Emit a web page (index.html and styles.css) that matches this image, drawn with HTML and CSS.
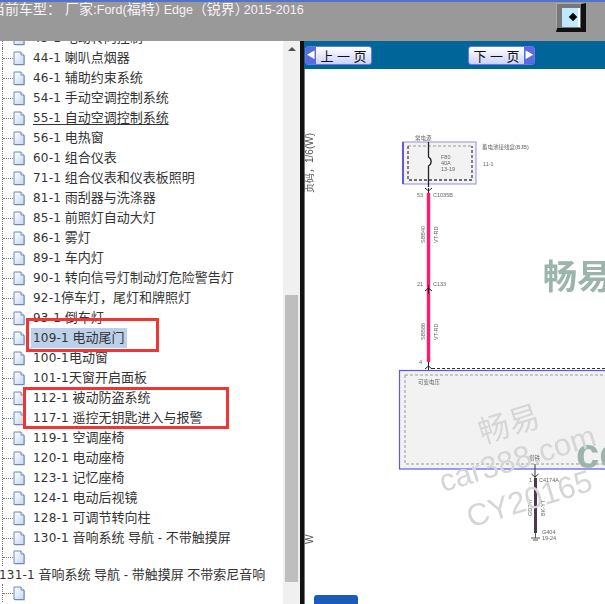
FILE: index.html
```html
<!DOCTYPE html>
<html lang="zh-CN">
<head>
    <meta charset="UTF-8">
    <meta name="viewport" content="width=device-width, initial-scale=1.0">
    <title>当前车型</title>
    <link rel="stylesheet" href="styles.css">
</head>
<body>
    <svg class="defs" width="0" height="0">
        <defs>
            <linearGradient id="pageFill" x1="0" y1="0" x2="1" y2="1">
                <stop offset="0" stop-color="#ffffff"/>
                <stop offset="1" stop-color="#c4d8f4"/>
            </linearGradient>
            <symbol id="page" viewBox="0 0 13 15">
                <path d="M2 2H9L12 5V14.5H2Z" fill="#9a9aa8" opacity="0.6"/>
                <path d="M1 1H8L11 4V13.5H1Z" fill="url(#pageFill)" stroke="#6f86b8"/>
                <path d="M8 1V4H11" fill="#fff" stroke="#6f86b8"/>
            </symbol>
        </defs>
    </svg>

    <header class="topbar">
        <div class="topbar-title">当前车型： 厂家:<span class="latin">Ford(</span>福特<span class="paren">）</span><span class="latin">Edge</span>（锐界<span class="paren">）</span><span class="latin">2015-2016</span></div>
        <div class="toggle">
            <div class="toggle-inner">
                <span class="toggle-mark"></span>
            </div>
        </div>
    </header>

    <main class="main">
        <section class="tree-pane">
            <ul class="tree">
                <li class="row"><span class="stem"></span><svg class="icon"><use href="#page"/></svg><span class="label"><span class="code">43-1</span> 电动转向控制</span></li>
                <li class="row"><span class="stem"></span><svg class="icon"><use href="#page"/></svg><span class="label"><span class="code">44-1</span> 喇叭点烟器</span></li>
                <li class="row"><span class="stem"></span><svg class="icon"><use href="#page"/></svg><span class="label"><span class="code">46-1</span> 辅助约束系统</span></li>
                <li class="row"><span class="stem"></span><svg class="icon"><use href="#page"/></svg><span class="label"><span class="code">54-1</span> 手动空调控制系统</span></li>
                <li class="row"><span class="stem"></span><svg class="icon"><use href="#page"/></svg><span class="label hovered"><span class="code">55-1</span> 自动空调控制系统</span></li>
                <li class="row"><span class="stem"></span><svg class="icon"><use href="#page"/></svg><span class="label"><span class="code">56-1</span> 电热窗</span></li>
                <li class="row"><span class="stem"></span><svg class="icon"><use href="#page"/></svg><span class="label"><span class="code">60-1</span> 组合仪表</span></li>
                <li class="row"><span class="stem"></span><svg class="icon"><use href="#page"/></svg><span class="label"><span class="code">71-1</span> 组合仪表和仪表板照明</span></li>
                <li class="row"><span class="stem"></span><svg class="icon"><use href="#page"/></svg><span class="label"><span class="code">81-1</span> 雨刮器与洗涤器</span></li>
                <li class="row"><span class="stem"></span><svg class="icon"><use href="#page"/></svg><span class="label"><span class="code">85-1</span> 前照灯自动大灯</span></li>
                <li class="row"><span class="stem"></span><svg class="icon"><use href="#page"/></svg><span class="label"><span class="code">86-1</span> 雾灯</span></li>
                <li class="row"><span class="stem"></span><svg class="icon"><use href="#page"/></svg><span class="label"><span class="code">89-1</span> 车内灯</span></li>
                <li class="row"><span class="stem"></span><svg class="icon"><use href="#page"/></svg><span class="label"><span class="code">90-1</span> 转向信号灯制动灯危险警告灯</span></li>
                <li class="row"><span class="stem"></span><svg class="icon"><use href="#page"/></svg><span class="label"><span class="code">92-1</span>停车灯，尾灯和牌照灯</span></li>
                <li class="row"><span class="stem"></span><svg class="icon"><use href="#page"/></svg><span class="label"><span class="code">93-1</span> 倒车灯</span></li>
                <li class="row"><span class="stem"></span><svg class="icon"><use href="#page"/></svg><span class="label selected"><span class="code">109-1</span> 电动尾门</span></li>
                <li class="row"><span class="stem"></span><svg class="icon"><use href="#page"/></svg><span class="label"><span class="code">100-1</span>电动窗</span></li>
                <li class="row"><span class="stem"></span><svg class="icon"><use href="#page"/></svg><span class="label"><span class="code">101-1</span>天窗开启面板</span></li>
                <li class="row"><span class="stem"></span><svg class="icon"><use href="#page"/></svg><span class="label"><span class="code">112-1</span> 被动防盗系统</span></li>
                <li class="row"><span class="stem"></span><svg class="icon"><use href="#page"/></svg><span class="label"><span class="code">117-1</span> 遥控无钥匙进入与报警</span></li>
                <li class="row"><span class="stem"></span><svg class="icon"><use href="#page"/></svg><span class="label"><span class="code">119-1</span> 空调座椅</span></li>
                <li class="row"><span class="stem"></span><svg class="icon"><use href="#page"/></svg><span class="label"><span class="code">120-1</span> 电动座椅</span></li>
                <li class="row"><span class="stem"></span><svg class="icon"><use href="#page"/></svg><span class="label"><span class="code">123-1</span> 记忆座椅</span></li>
                <li class="row"><span class="stem"></span><svg class="icon"><use href="#page"/></svg><span class="label"><span class="code">124-1</span> 电动后视镜</span></li>
                <li class="row"><span class="stem"></span><svg class="icon"><use href="#page"/></svg><span class="label"><span class="code">128-1</span> 可调节转向柱</span></li>
                <li class="row"><span class="stem"></span><svg class="icon"><use href="#page"/></svg><span class="label"><span class="code">130-1</span> 音响系统 导航 - 不带触摸屏</span></li>
                <li class="row row-short"><span class="stem"></span><svg class="icon"><use href="#page"/></svg></li>
                <li class="row-wrapped"><span class="code">131-1</span> 音响系统 导航 - 带触摸屏 不带索尼音响</li>
                <li class="row row-short"><span class="stem"></span><svg class="icon"><use href="#page"/></svg></li>
            </ul>
            <div class="scrollbar">
                <span class="scroll-up"></span>
                <div class="scroll-thumb"></div>
            </div>
            <div class="callout callout-one"></div>
            <div class="callout callout-two"></div>
        </section>

        <section class="viewer">
            <nav class="pager">
                <div class="page-btn page-btn-prev"><span class="page-arrow">&#9664;</span><span class="page-text">上 一 页</span></div>
                <div class="page-btn page-btn-next"><span class="page-text">下 一 页</span><span class="page-arrow">&#9654;</span></div>
            </nav>
            <svg class="diagram" viewBox="304 69 301 535">
                <g class="soft">
                    <rect x="403" y="142" width="73" height="42" fill="#f2f2f2" stroke="#8f8fe0"/>
                    <path d="M403 142V184" stroke="#3a3ad0" stroke-width="1.5"/>
                    <path d="M408 146H472" stroke="#999" stroke-dasharray="3 2"/>
                    <path d="M408 146V180H472V146" fill="none" stroke="#444" stroke-width="1.3" stroke-dasharray="3 2"/>
                    <path d="M428.500 142V157C432 159 432 164 428.500 166V187" fill="none" stroke="#222" stroke-width="1.3"/>
                    <path d="M425 188L428.500 191L432 188M428.500 188V193" fill="none" stroke="#222"/>
                    <rect x="426.800" y="193" width="3.400" height="169" fill="#ff1a70"/>
                    <path d="M425 291L428.500 288L432 291M428.500 285V294" fill="none" stroke="#222"/>
                    <path d="M425 369L428.500 366L432 369M428.500 362V376" fill="none" stroke="#222"/>

                    <rect x="399.500" y="370.500" width="210" height="98.500" fill="#f2f2f2" stroke="#5a5ae6" stroke-width="1.200"/>
                    <rect x="405" y="375" width="210" height="89" fill="none" stroke="#999" stroke-dasharray="3 2"/>
                    <path d="M432 368.500H609" stroke="#333" stroke-dasharray="3 2"/>
                    <path d="M535 464V478M531.500 474L535 477L538.500 474" fill="none" stroke="#333"/>
                    <rect x="534" y="478" width="3" height="55" fill="#4a3a50"/>
                    <path d="M535.500 533V538M531 538H540M533 540H538" stroke="#555"/>

                    <text class="tiny" x="415" y="140">常电源</text>
                    <text class="tiny" x="482" y="149">蓄电池接线盒(BJB)</text>
                    <text class="tiny" x="483" y="166">11-1</text>
                    <text class="tiny" x="441" y="159">F80</text>
                    <text class="tiny" x="441" y="165">40A</text>
                    <text class="tiny" x="441" y="171">13-19</text>
                    <text class="tiny" x="417" y="197">53</text>
                    <text class="tiny" x="433" y="197">C1035B</text>
                    <text class="tiny" x="417" y="286">21</text>
                    <text class="tiny" x="433" y="286">C133</text>
                    <text class="tiny" x="419" y="364">4</text>
                    <text class="tiny" x="418" y="384">可变电压</text>
                    <text class="tiny" x="529" y="460">搭铁</text>
                    <text class="tiny" x="529" y="482">1</text>
                    <text class="tiny" x="539" y="482">C4174A</text>
                    <text class="tiny" x="542" y="534">G404</text>
                    <text class="tiny" x="542" y="540">19-24</text>
                    <text class="tiny" transform="rotate(-90 425 243)" x="425" y="243">SBB40</text>
                    <text class="tiny" transform="rotate(-90 438 243)" x="438" y="243">VT-RD</text>
                    <text class="tiny" transform="rotate(-90 425 340)" x="425" y="340">SBB86</text>
                    <text class="tiny" transform="rotate(-90 438 340)" x="438" y="340">VT-RD</text>
                    <text class="tiny" transform="rotate(-90 532 516)" x="532" y="516">GD247</text>
                    <text class="tiny" transform="rotate(-90 545 516)" x="545" y="516">BK-YT</text>
                    <text class="page-note" transform="rotate(-90 313 193)" x="313" y="193">页码，1/6(W)</text>
                    <text class="page-note" transform="rotate(-90 313 544)" x="313" y="544">W</text>
                </g>
                <g class="soft">
                    <text class="mark-teal" x="543" y="289">畅易</text>
                    <text class="mark-teal mark-latin" x="576" y="468">co</text>
                    <g transform="rotate(-17 520 450)">
                        <text class="mark-gray" x="486" y="433">畅易</text>
                        <text class="mark-gray" x="434" y="468">car388.com</text>
                        <text class="mark-gray" x="450" y="510">CY20165</text>
                    </g>
                </g>
            </svg>
            <div class="stub"></div>
        </section>
    </main>
</body>
</html>
```

FILE: styles.css
```css
* {
    box-sizing: border-box;
}
html, body {
    height: 100%;
}
body {
    margin: 0;
    display: flex;
    flex-direction: column;
    overflow: hidden;
    background: #fff;
    color: #333;
    font-family: "Liberation Sans", "Noto Sans CJK SC", sans-serif;
    font-size: 13px;
}
.defs {
    position: absolute;
}

/* top bar */
.topbar {
    height: 41px;
    flex: none;
    display: flex;
    justify-content: space-between;
    align-items: flex-start;
    background: #999;
    border-top: 2px solid #4f74c8;
}
.topbar-title {
    margin-left: -9px;
    color: #f4f4f4;
    font-size: 14px;
    line-height: 15px;
    white-space: nowrap;
}
.latin {
    font-size: 12.5px;
}
.paren {
    margin-right: -5px;
}
.toggle {
    width: 30px;
    height: 29px;
    margin: 1px 19px 0 0;
    padding: 4px 1px 1px 5px;
    background: #787878;
    border-style: solid;
    border-width: 1px 5px 4px 1px;
    border-color: #aaa #111 #111 #aaa;
}
.toggle-inner {
    height: 100%;
    position: relative;
    background: #bfe9ff;
    border-right: 2px solid #fff;
}
.toggle-mark {
    position: absolute;
    top: 6px;
    left: 8px;
    width: 6px;
    height: 6px;
    background: #000;
    transform: rotate(45deg);
}

/* layout */
.main {
    flex: 1;
    min-height: 0;
    display: flex;
}
.tree-pane {
    width: 300px;
    flex: none;
    display: flex;
    position: relative;
    overflow: hidden;
}

/* tree */
.tree {
    flex: 1;
    min-width: 0;
    margin: -13px 0 0;
    padding: 0;
    list-style: none;
}
.row {
    height: 20px;
    margin-left: 2px;
    display: flex;
    align-items: center;
    border-left: 1px dotted #777;
    white-space: nowrap;
}
.row-short {
    height: 18px;
}
.row-wrapped {
    height: 18px;
    line-height: 18px;
    margin-left: -1px;
    white-space: nowrap;
}
.stem {
    width: 10px;
    height: 1px;
    flex: none;
    border-top: 1px dotted #777;
}
.icon {
    width: 13px;
    height: 15px;
    flex: none;
}
.label {
    margin-left: 5px;
    padding: 0 2px;
    line-height: 19px;
}
.code {
    font-family: "DejaVu Sans", sans-serif;
    font-size: 12px;
    letter-spacing: 0.2px;
}
.hovered {
    text-decoration: underline;
    text-underline-offset: 2px;
}
.selected {
    background: #bcd0ea;
}

/* scrollbar */
.scrollbar {
    width: 17px;
    flex: none;
    padding: 6px 2px 0;
    display: flex;
    flex-direction: column;
    align-items: center;
    background: #f0f0f0;
}
.scroll-up {
    width: 0;
    height: 0;
    flex: none;
    border-left: 4px solid transparent;
    border-right: 4px solid transparent;
    border-bottom: 4px solid #505050;
}
.scroll-thumb {
    width: 13px;
    height: 287px;
    flex: none;
    margin-top: 244px;
    background: #bebebe;
}

/* red notes drawn over the list */
.callout {
    position: absolute;
    border: 3px solid #f03535;
}
.callout-one {
    left: 26px;
    top: 277px;
    width: 133px;
    height: 34px;
}
.callout-two {
    left: 23px;
    top: 346px;
    width: 206px;
    height: 42px;
}

/* right side */
.viewer {
    flex: 1;
    min-width: 0;
    display: flex;
    flex-direction: column;
    position: relative;
    overflow: hidden;
    border-left: 4px solid #111;
    box-shadow: inset 1px 0 0 #777;
}
.pager {
    height: 28px;
    flex: none;
    display: flex;
    justify-content: space-between;
    align-items: flex-start;
    padding: 5px 70px 0 1px;
    background: #006699;
}
.page-btn {
    width: 67px;
    height: 19px;
    display: flex;
    align-items: center;
    justify-content: space-between;
    background: linear-gradient(#ffffff, #ccd2f6);
    border: 1px solid #6e78e0;
    border-radius: 3px;
    color: #111;
    font-size: 13px;
}
.page-arrow {
    width: 10px;
    height: 100%;
    flex: none;
    background: #5a6ae0;
    color: #fff;
    font-size: 9px;
    line-height: 17px;
    text-align: center;
}
.page-text {
    flex: 1;
    text-align: center;
    white-space: nowrap;
}
.diagram {
    flex: 1;
    min-height: 0;
    width: 100%;
}
.soft {
    filter: blur(0.4px);
}
.tiny {
    font-size: 5.5px;
    fill: #666;
}
.page-note {
    font-size: 10px;
    fill: #555;
}
.mark-teal {
    font-size: 34px;
    font-weight: 700;
    fill: #9bb5ac;
}
.mark-latin {
    font-size: 42px;
}
.mark-gray {
    font-size: 31px;
    fill: #d6d6d6;
}
.stub {
    position: absolute;
    left: 10px;
    bottom: 0;
    width: 44px;
    height: 9px;
    background: #1c5cb8;
    border-radius: 3px 3px 0 0;
}
```
